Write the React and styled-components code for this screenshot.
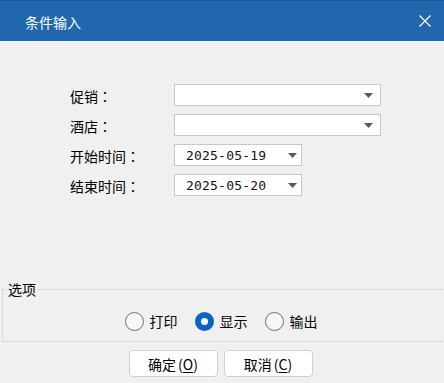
import React from 'react'
import styled, { createGlobalStyle } from 'styled-components'

const GlobalStyle = createGlobalStyle`
    html, body {
        margin: 0;
        padding: 0;
        background: #f0f0f0;
    }
    body {
        font-family: "Noto Sans CJK SC", "Microsoft YaHei", sans-serif;
        font-size: 14px;
        color: #000;
    }
`;

const fields = [
    { label: '促销', type: 'combo' },
    { label: '酒店', type: 'combo' },
    { label: '开始时间', type: 'date', value: '2025-05-19' },
    { label: '结束时间', type: 'date', value: '2025-05-20' },
];

const options = [
    { label: '打印', checked: false },
    { label: '显示', checked: true },
    { label: '输出', checked: false },
];

const Arrow = () => (
    <svg width="9" height="5" viewBox="0 0 9 5">
        <path d="M0 0 H9 L4.5 5 Z" fill="#565d57" />
    </svg>
);

const App = () => {
    return (
        <Window>
            <GlobalStyle />
            <TitleBar>
                <Title>条件输入</Title>
                <Close>
                    <svg width="12" height="12" viewBox="0 0 12 12">
                        <path d="M0.5 0.5 L11.5 11.5 M11.5 0.5 L0.5 11.5" stroke="#fff" strokeWidth="1.2" />
                    </svg>
                </Close>
            </TitleBar>
            <Form>
                {fields.map((f) => (
                    <Row key={f.label}>
                        <Label>{f.label}<Colon>：</Colon></Label>
                        <Field wide={f.type === 'combo'}>
                            <Value>{f.value}</Value>
                            <ArrowBox wide={f.type === 'combo'}><Arrow /></ArrowBox>
                        </Field>
                    </Row>
                ))}
            </Form>
            <Group>
                <Legend>选项</Legend>
                <Radios>
                    {options.map((o) => (
                        <RadioItem key={o.label}>
                            <Circle checked={o.checked} />
                            <span>{o.label}</span>
                        </RadioItem>
                    ))}
                </Radios>
            </Group>
            <Buttons>
                <Button>确定<Paren>(<u>O</u>)</Paren></Button>
                <Button>取消<Paren>(<u>C</u>)</Paren></Button>
            </Buttons>
        </Window>
    )
}

export default App;

const Window = styled.div`
    width: 444px;
    height: 383px;
    display: flex;
    flex-direction: column;
    background: #f0f0f0;
    overflow: hidden;
`;

const TitleBar = styled.div`
    height: 40px;
    border-top: 1px solid #1a5692;
    background: #2067ad;
    display: flex;
    align-items: center;
    justify-content: space-between;
    padding: 0 13px 0 25px;
    flex-shrink: 0;
`;

const Title = styled.div`
    color: #fff;
    font-size: 14px;
    line-height: 20px;
    margin-top: 2px;
`;

const Close = styled.div`
    display: flex;
    width: 12px;
    height: 12px;
`;

const Form = styled.div`
    display: flex;
    flex-direction: column;
    gap: 8px;
    padding: 43px 0 0 70px;
`;

const Row = styled.div`
    display: flex;
    align-items: center;
    height: 22px;
`;

const Label = styled.div`
    width: 104px;
    line-height: 22px;
    margin-top: 1px;
`;

const Colon = styled.span`
    font-family: "Noto Sans CJK TC", sans-serif;
`;

const Field = styled.div`
    box-sizing: border-box;
    width: ${({wide}) => wide ? '207px' : '128px'};
    height: 22px;
    background: #fff;
    border: 1px solid #c8c8c8;
    display: flex;
    align-items: center;
    justify-content: space-between;
    padding-left: 11px;
`;

const Value = styled.div`
    font-family: "DejaVu Sans Mono", monospace;
    font-size: 13px;
    color: #10102a;
    letter-spacing: 0.2px;
`;

const ArrowBox = styled.div`
    display: flex;
    margin-right: ${({wide}) => wide ? '7px' : '4px'};
`;

const Group = styled.fieldset`
    margin: auto 0 0 2px;
    width: 441px;
    box-sizing: border-box;
    border: 1px solid #d8d8d8;
    border-right: none;
    padding: 13px 0 10px;
    min-inline-size: 0;
`;

const Legend = styled.legend`
    padding: 0 2px;
    margin-left: 3px;
    height: 18px;
    line-height: 18px;
    font-size: 14px;
`;

const Radios = styled.div`
    display: flex;
    justify-content: center;
    gap: 17px;
    height: 20px;
    margin-right: 4px;
`;

const RadioItem = styled.div`
    display: flex;
    align-items: center;
    gap: 6px;
    line-height: 20px;
`;

const Circle = styled.span`
    box-sizing: border-box;
    width: 19px;
    height: 19px;
    border-radius: 50%;
    border: ${({checked}) => checked ? '6px solid #0a64c4' : '1px solid #6e6e6e'};
    background: ${({checked}) => checked ? '#fff' : '#f7f7f7'};
`;

const Buttons = styled.div`
    display: flex;
    justify-content: center;
    gap: 6px;
    padding: 8px 0 6px;
    margin-right: 3px;
`;

const Button = styled.div`
    box-sizing: border-box;
    width: 89px;
    height: 27px;
    border: 1px solid #d0d0d0;
    border-radius: 4px;
    background: #fff;
    display: flex;
    align-items: center;
    justify-content: center;
    font-size: 14px;
`;

const Paren = styled.span`
    margin-left: 2px;
    u {
        text-underline-offset: 2px;
    }
`;
